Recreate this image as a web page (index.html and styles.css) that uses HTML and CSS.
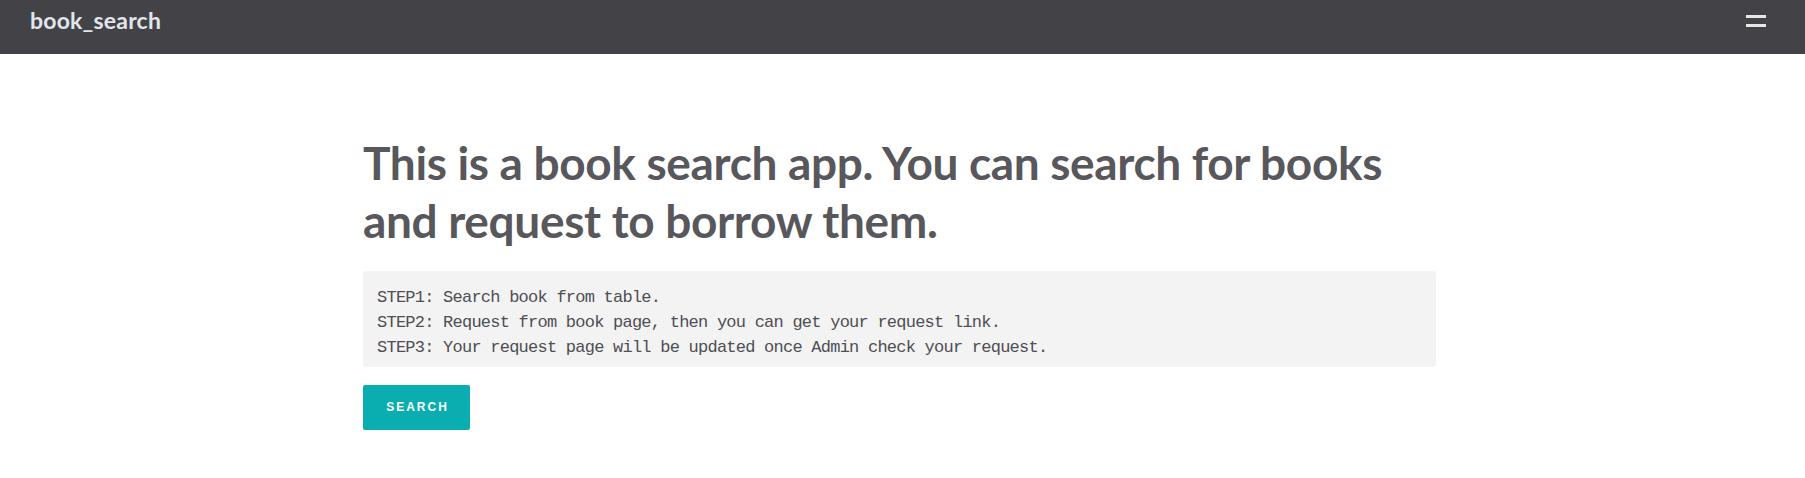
FILE: index.html
```html
<!DOCTYPE html>
<html lang="en">
<head>
<meta charset="utf-8">
<title>book_search</title>
<link rel="stylesheet" href="styles.css">
</head>
<body>
<header class="navbar">
  <a class="brand" href="#">book_search</a>
  <button class="menu-toggle" aria-label="menu">
    <span class="bar"></span>
    <span class="bar"></span>
  </button>
</header>
<main class="container">
  <h1 class="title">This is a book search app. You can search for books and request to borrow them.</h1>
  <pre class="steps">STEP1: Search book from table.
STEP2: Request from book page, then you can get your request link.
STEP3: Your request page will be updated once Admin check your request.</pre>
  <a class="btn" href="#">SEARCH</a>
</main>
</body>
</html>
```

FILE: styles.css
```css
html, body {
  margin: 0;
  padding: 0;
  background: #ffffff;
}
body {
  font-family: Lato, "Open Sans", sans-serif;
}
.navbar {
  height: 54px;
  background: #434247;
  display: flex;
  align-items: flex-start;
  justify-content: space-between;
  padding: 0 39px 0 30px;
  box-sizing: border-box;
}
.brand {
  color: #e1e6ec;
  text-decoration: none;
  font-family: Lato, "Open Sans", sans-serif;
  font-weight: 700;
  font-size: 23px;
  line-height: 23px;
  padding-top: 9px;
  letter-spacing: 0.2px;
}
.menu-toggle {
  background: none;
  border: 0;
  padding: 15px 0 0 0;
  margin: 0;
  display: flex;
  flex-direction: column;
  gap: 6px;
  cursor: pointer;
}
.bar {
  display: block;
  width: 20px;
  height: 3px;
  background: #e6e6e6;
}
.container {
  width: 1073px;
  margin: 0 auto;
  padding: 80px 6px 0 0;
}
.title {
  margin: 0;
  font-family: Lato, "Open Sans", sans-serif;
  font-weight: 700;
  font-size: 46px;
  letter-spacing: -0.34px;
  line-height: 58px;
  color: #58575c;
}
.steps {
  margin: 21px 0 0 0;
  padding: 14px 14px 7px;
  background: #f3f3f3;
  border-radius: 4px;
  font-family: "Liberation Mono", "DejaVu Sans Mono", monospace;
  font-size: 17px;
  letter-spacing: -0.76px;
  line-height: 25px;
  color: #4f4e53;
}
.btn {
  display: inline-block;
  margin-top: 18px;
  width: 107px;
  height: 45px;
  line-height: 45px;
  text-align: center;
  background: #0aaeb0;
  border-radius: 2px;
  color: #ffffff;
  text-decoration: none;
  font-family: "Liberation Sans", Arial, sans-serif;
  font-weight: 700;
  font-size: 12px;
  letter-spacing: 2px;
  padding-left: 2px;
  box-sizing: border-box;
}
```
